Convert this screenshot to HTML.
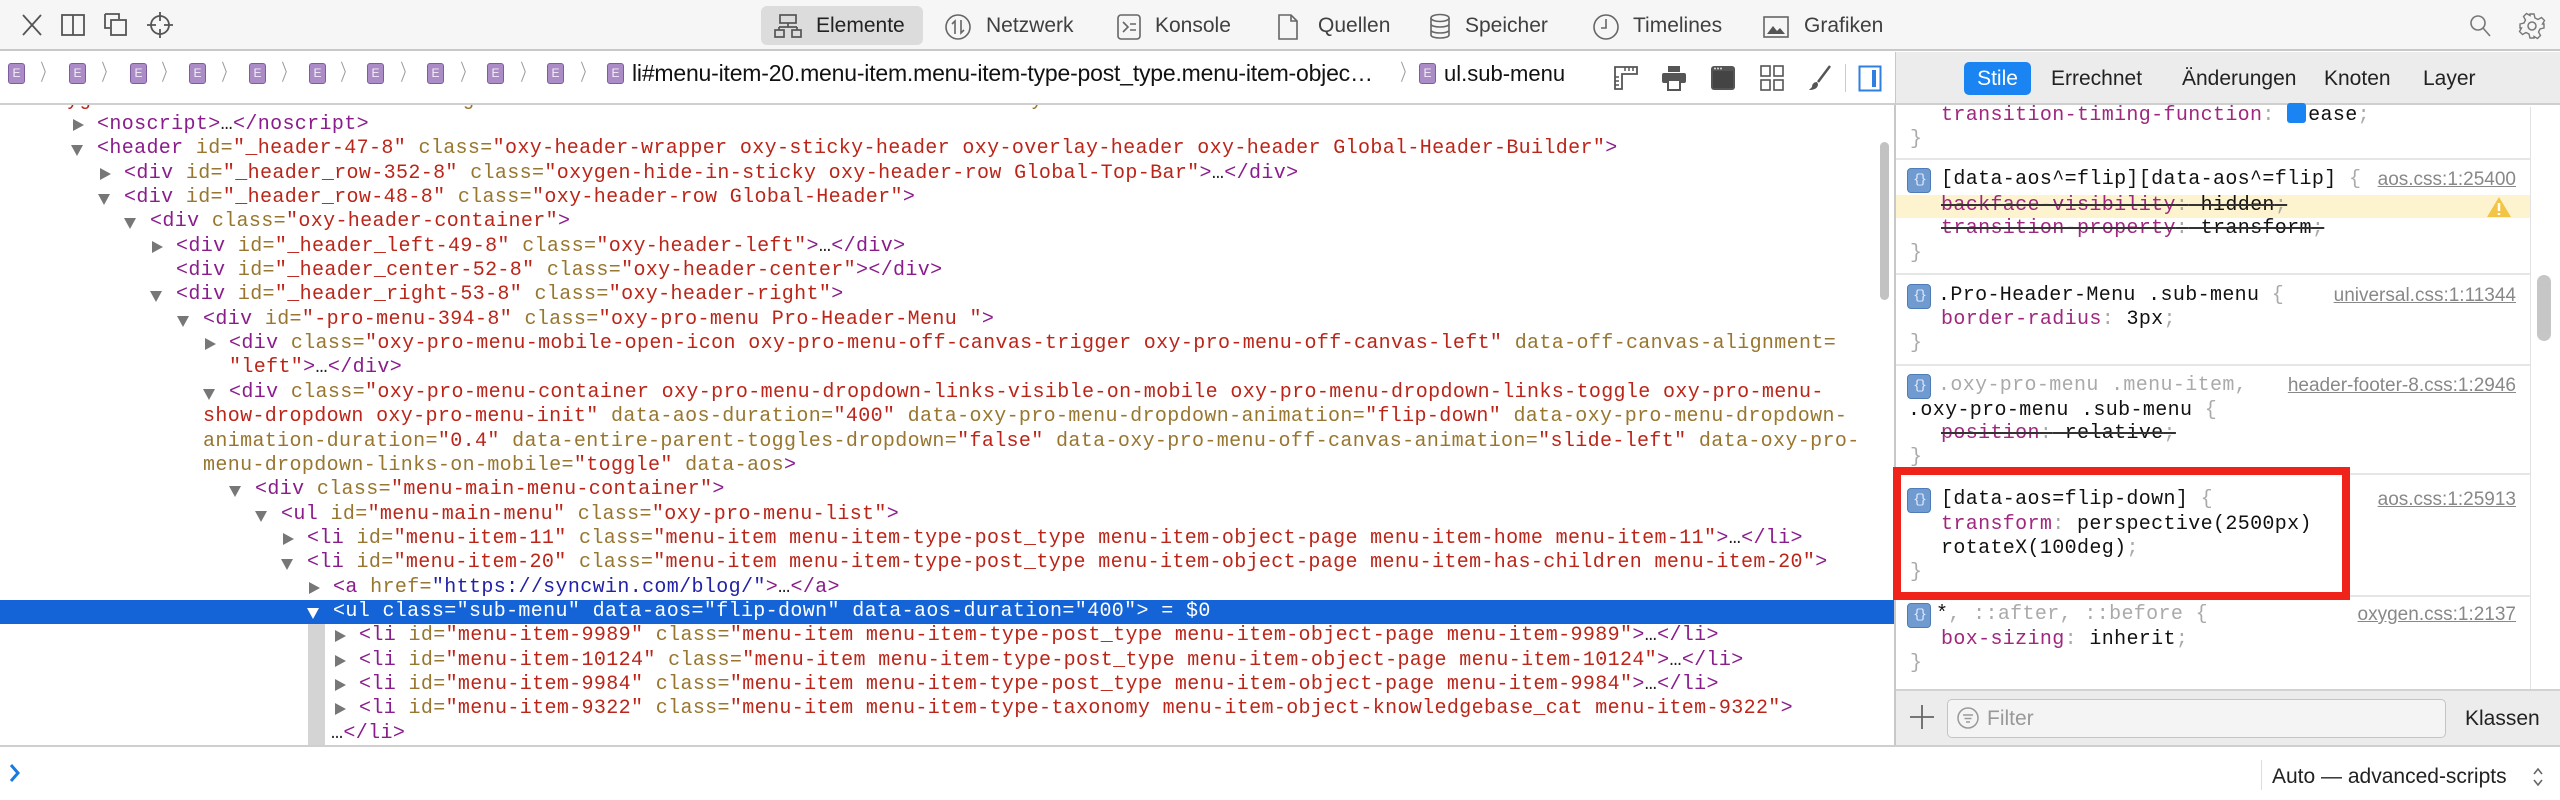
<!DOCTYPE html>
<html><head><meta charset="utf-8"><style>
*{margin:0;padding:0;box-sizing:border-box}
body{width:2560px;height:800px;position:relative;overflow:hidden;background:#fff;font-family:"Liberation Sans",sans-serif;color:#333}
.abs{position:absolute}
#tb{left:0;top:0;width:2560px;height:51px;background:#f6f6f6;border-bottom:2px solid #c8c8c8}
.tab{position:absolute;top:14px;font-size:21px;color:#404040;line-height:24px}
.ti{position:absolute;top:13px}
#bc{left:0;top:52px;width:1895px;height:53px;background:#fff;border-bottom:2px solid #cfcfcf}
#side{left:1895px;top:52px;width:1665px;height:53px;background:#ececec;border-bottom:2px solid #cfcfcf;border-left:1px solid #c8c8c8}
.eb{position:absolute;top:63px;width:17px;height:21px;border-radius:3px;background:#ab8cc6;border:1px solid #7d5d9e;color:#f4eefa;font-size:12px;line-height:19px;text-align:center;font-family:"Liberation Sans",sans-serif}
.ch{position:absolute;top:60px;color:#9a9a9a;font-size:22px;line-height:26px;transform:scaleX(.6)}
.r{position:absolute;height:24px;line-height:24px;white-space:nowrap;font-family:"Liberation Mono",monospace;font-size:20px;letter-spacing:0.36px;color:#222}
t{color:#8a1c8c}n{color:#98762f}v{color:#bb2519}w{color:#2222a8}
.tr{position:absolute;left:-24px;top:6px;width:0;height:0;border-top:6px solid transparent;border-bottom:6px solid transparent;border-left:11px solid #777}
.td{position:absolute;left:-26px;top:8px;width:0;height:0;border-left:6px solid transparent;border-right:6px solid transparent;border-top:11px solid #777}
.sel{color:#fff}
.sl{position:absolute;height:24px;line-height:24px;white-space:nowrap;font-family:"Liberation Mono",monospace;font-size:20px;letter-spacing:0.36px;color:#111}
.pn{color:#a0267f}.g{color:#aaa}.st{text-decoration:line-through;text-decoration-color:#333}
.ic{position:absolute;left:1907px;width:24px;height:25px;border-radius:4px;background:#6f9bd0;border:1px solid #4f7cb4;color:#eef;font-size:13px;line-height:22px;text-align:center;font-family:"Liberation Mono",monospace;letter-spacing:-2px}
.lk{position:absolute;right:44px;font-size:19px;color:#888;text-decoration:underline;line-height:24px}
.sep{position:absolute;left:1896px;width:634px;height:2px;background:#e6e6e6}
</style></head><body>

<div id="tb" class="abs"></div>
<svg class="abs" style="left:20px;top:12px" width="24" height="26" viewBox="0 0 24 26"><path d="M3 3L21 23M21 3L3 23" stroke="#555" stroke-width="1.8" fill="none"/></svg>
<svg class="abs" style="left:60px;top:12px" width="26" height="26" viewBox="0 0 26 26"><rect x="2" y="3" width="22" height="20" fill="none" stroke="#555" stroke-width="1.8"/><path d="M13 3V23" stroke="#555" stroke-width="1.8"/></svg>
<svg class="abs" style="left:102px;top:11px" width="28" height="28" viewBox="0 0 28 28"><path d="M3 3h14v5M3 3v14h5" fill="none" stroke="#555" stroke-width="1.8"/><rect x="9" y="9" width="15" height="15" fill="none" stroke="#555" stroke-width="1.8"/></svg>
<svg class="abs" style="left:146px;top:11px" width="28" height="28" viewBox="0 0 28 28"><circle cx="14" cy="14" r="9" fill="none" stroke="#555" stroke-width="1.8"/><path d="M14 1v9M14 18v9M1 14h9M18 14h9" stroke="#555" stroke-width="1.8"/></svg>
<div class="abs" style="left:761px;top:6px;width:162px;height:39px;background:#dcdcdc;border-radius:6px"></div>
<svg class="ti" style="left:774px" width="28" height="26" viewBox="0 0 28 26"><rect x="6" y="2" width="16" height="8" fill="none" stroke="#555" stroke-width="1.7"/><path d="M14 10v4M5 14h18M5 14v3M23 14v3" stroke="#555" stroke-width="1.7" fill="none"/><rect x="1" y="17" width="9" height="7" fill="none" stroke="#555" stroke-width="1.7"/><rect x="18" y="17" width="9" height="7" fill="none" stroke="#555" stroke-width="1.7"/></svg>
<div class="tab" style="left:816px;color:#222">Elemente</div>
<svg class="ti" style="left:944px" width="28" height="28" viewBox="0 0 28 28"><circle cx="14" cy="14" r="12" fill="none" stroke="#666" stroke-width="1.6"/><path d="M11 21V8l-3 3M17 7v13l3-3" fill="none" stroke="#666" stroke-width="1.6"/></svg>
<div class="tab" style="left:986px">Netzwerk</div>
<svg class="ti" style="left:1116px" width="26" height="28" viewBox="0 0 26 28"><rect x="2" y="2" width="22" height="24" rx="3" fill="none" stroke="#666" stroke-width="1.6"/><path d="M7 9l5 5-5 5M14 11h6M14 17h6" fill="none" stroke="#666" stroke-width="1.6"/></svg>
<div class="tab" style="left:1155px">Konsole</div>
<svg class="ti" style="left:1276px" width="24" height="28" viewBox="0 0 24 28"><path d="M3 2h12l6 6v18H3z" fill="none" stroke="#666" stroke-width="1.6"/><path d="M15 2v6h6" fill="none" stroke="#666" stroke-width="1.6"/></svg>
<div class="tab" style="left:1318px">Quellen</div>
<svg class="ti" style="left:1428px" width="24" height="28" viewBox="0 0 24 28"><ellipse cx="12" cy="5" rx="9" ry="3.5" fill="none" stroke="#666" stroke-width="1.6"/><path d="M3 5v6c0 4 18 4 18 0V5M3 11v6c0 4 18 4 18 0v-6M3 17v5c0 4 18 4 18 0v-5" fill="none" stroke="#666" stroke-width="1.6"/></svg>
<div class="tab" style="left:1465px">Speicher</div>
<svg class="ti" style="left:1592px" width="28" height="28" viewBox="0 0 28 28"><circle cx="14" cy="14" r="12" fill="none" stroke="#666" stroke-width="1.6"/><path d="M14 6v9h-5" fill="none" stroke="#666" stroke-width="1.6"/></svg>
<div class="tab" style="left:1633px">Timelines</div>
<svg class="ti" style="left:1762px;top:15px" width="28" height="24" viewBox="0 0 28 24"><rect x="2" y="2" width="24" height="20" fill="none" stroke="#666" stroke-width="1.6"/><path d="M5 19l6-8 4 5 3-3 5 6z" fill="#555"/></svg>
<div class="tab" style="left:1804px">Grafiken</div>
<svg class="abs" style="left:2468px;top:13px" width="24" height="26" viewBox="0 0 24 26"><circle cx="10" cy="10" r="7" fill="none" stroke="#777" stroke-width="1.6"/><path d="M15 15l7 8" stroke="#777" stroke-width="1.6"/></svg>
<svg class="abs" style="left:2518px;top:12px" width="28" height="28" viewBox="0 0 28 28"><circle cx="14" cy="14" r="4" fill="none" stroke="#777" stroke-width="1.5"/><path d="M12 2h4l1 4 3 1.5 3.5-2 3 3-2 3.5L26 12v4l-4 1-1.5 3 2 3.5-3 3-3.5-2L16 26h-4l-1-4-3-1.5-3.5 2-3-3 2-3.5L2 16v-4l4-1 1.5-3-2-3.5 3-3 3.5 2z" fill="none" stroke="#777" stroke-width="1.4"/></svg>

<div id="bc" class="abs"></div>
<div id="side" class="abs"></div>
<div class="eb" style="left:8px">E</div><div class="ch" style="left:36px">〉</div>
<div class="eb" style="left:69px">E</div><div class="ch" style="left:97px">〉</div>
<div class="eb" style="left:130px">E</div><div class="ch" style="left:157px">〉</div>
<div class="eb" style="left:189px">E</div><div class="ch" style="left:217px">〉</div>
<div class="eb" style="left:249px">E</div><div class="ch" style="left:277px">〉</div>
<div class="eb" style="left:309px">E</div><div class="ch" style="left:336px">〉</div>
<div class="eb" style="left:367px">E</div><div class="ch" style="left:396px">〉</div>
<div class="eb" style="left:427px">E</div><div class="ch" style="left:456px">〉</div>
<div class="eb" style="left:487px">E</div><div class="ch" style="left:516px">〉</div>
<div class="eb" style="left:547px">E</div><div class="ch" style="left:576px">〉</div>
<div class="eb" style="left:607px">E</div>
<div class="abs" style="left:632px;top:60px;font-size:23px;line-height:27px;color:#111;white-space:nowrap;letter-spacing:-0.2px">li#menu-item-20.menu-item.menu-item-type-post_type.menu-item-objec…</div>
<div class="ch" style="left:1396px">〉</div>
<div class="eb" style="left:1419px">E</div>
<div class="abs" style="left:1444px;top:60px;font-size:22px;line-height:27px;color:#111;white-space:nowrap">ul.sub-menu</div>
<svg class="abs" style="left:1613px;top:65px" width="26" height="26" viewBox="0 0 26 26"><path d="M2 2h22v7H9v15H2z" fill="none" stroke="#555" stroke-width="1.8"/><path d="M12 2v4M16 2v4M20 2v4M2 12h4M2 16h4M2 20h4" stroke="#555" stroke-width="1.5"/></svg>
<svg class="abs" style="left:1661px;top:65px" width="26" height="26" viewBox="0 0 26 26"><rect x="7" y="1" width="12" height="6" fill="#555"/><rect x="1" y="8" width="24" height="10" rx="2" fill="#555"/><rect x="7" y="15" width="12" height="10" fill="#fff" stroke="#555" stroke-width="2"/></svg>
<svg class="abs" style="left:1710px;top:65px" width="26" height="26" viewBox="0 0 26 26"><rect x="1" y="1" width="24" height="24" rx="3" fill="#555"/><rect x="3" y="6" width="20" height="17" fill="#444"/><circle cx="5" cy="3.5" r="1" fill="#ddd"/><circle cx="8" cy="3.5" r="1" fill="#ddd"/><circle cx="11" cy="3.5" r="1" fill="#ddd"/></svg>
<svg class="abs" style="left:1760px;top:65px" width="25" height="26" viewBox="0 0 25 26"><rect x="1" y="1" width="9" height="10" fill="none" stroke="#555" stroke-width="1.6"/><rect x="14" y="1" width="9" height="10" fill="none" stroke="#555" stroke-width="1.6"/><rect x="1" y="15" width="9" height="10" fill="none" stroke="#555" stroke-width="1.6"/><rect x="14" y="15" width="9" height="10" fill="none" stroke="#555" stroke-width="1.6"/></svg>
<svg class="abs" style="left:1808px;top:65px" width="24" height="26" viewBox="0 0 24 26"><path d="M22 1L10 17" stroke="#555" stroke-width="2.5"/><path d="M9 17c-3 0-5 2-5 5l-3 3c4 0 9-1 9-6z" fill="#555"/></svg>
<div class="abs" style="left:1845px;top:64px;width:1px;height:28px;background:#ccc"></div>
<svg class="abs" style="left:1858px;top:65px" width="24" height="27" viewBox="0 0 24 27"><rect x="1.5" y="1.5" width="21" height="24" fill="none" stroke="#2f7fe0" stroke-width="2"/><rect x="14" y="5" width="4" height="17" fill="#2f7fe0"/></svg>

<div class="abs" style="left:1964px;top:62px;width:67px;height:33px;background:#1a84f2;border-radius:5px;color:#fff;font-size:21px;line-height:33px;text-align:center">Stile</div>
<div class="abs" style="left:2051px;top:66px;font-size:21px;color:#222;line-height:26px">Errechnet</div>
<div class="abs" style="left:2182px;top:66px;font-size:21px;color:#222;line-height:26px">Änderungen</div>
<div class="abs" style="left:2324px;top:66px;font-size:21px;color:#222;line-height:26px">Knoten</div>
<div class="abs" style="left:2423px;top:66px;font-size:21px;color:#222;line-height:26px">Layer</div>

<div class="abs" style="left:0;top:600px;width:1894px;height:24px;background:#1464d8"></div>
<div class="abs" style="left:308px;top:624px;width:17px;height:122px;background:#d4d4d4"></div>
<div class="abs" style="left:1880px;top:142px;width:9px;height:158px;background:#c2c2c2;border-radius:5px"></div>

<div class="r" style="top:89px;left:42px;clip-path:inset(16px 0 0 0)"><v>oxygen-aos-enabled"</v> <n>data-aos-easing=</n><v>"ease"</v> <n>data-aos-duration=</n><v>"400"</v> <n>data-aos-delay=</n><v>"0"</v><t>&gt;</t></div>
<div class="r" style="top:113px;left:97px"><i class="tr"></i><t>&lt;noscript&gt;</t>…<t>&lt;/noscript&gt;</t></div>
<div class="r" style="top:137px;left:97px"><i class="td"></i><t>&lt;header</t> <n>id=</n><v>"_header-47-8"</v> <n>class=</n><v>"oxy-header-wrapper oxy-sticky-header oxy-overlay-header oxy-header Global-Header-Builder"</v><t>&gt;</t></div>
<div class="r" style="top:162px;left:124px"><i class="tr"></i><t>&lt;div</t> <n>id=</n><v>"_header_row-352-8"</v> <n>class=</n><v>"oxygen-hide-in-sticky oxy-header-row Global-Top-Bar"</v><t>&gt;</t>…<t>&lt;/div&gt;</t></div>
<div class="r" style="top:186px;left:124px"><i class="td"></i><t>&lt;div</t> <n>id=</n><v>"_header_row-48-8"</v> <n>class=</n><v>"oxy-header-row Global-Header"</v><t>&gt;</t></div>
<div class="r" style="top:210px;left:150px"><i class="td"></i><t>&lt;div</t> <n>class=</n><v>"oxy-header-container"</v><t>&gt;</t></div>
<div class="r" style="top:235px;left:176px"><i class="tr"></i><t>&lt;div</t> <n>id=</n><v>"_header_left-49-8"</v> <n>class=</n><v>"oxy-header-left"</v><t>&gt;</t>…<t>&lt;/div&gt;</t></div>
<div class="r" style="top:259px;left:176px"><t>&lt;div</t> <n>id=</n><v>"_header_center-52-8"</v> <n>class=</n><v>"oxy-header-center"</v><t>&gt;&lt;/div&gt;</t></div>
<div class="r" style="top:283px;left:176px"><i class="td"></i><t>&lt;div</t> <n>id=</n><v>"_header_right-53-8"</v> <n>class=</n><v>"oxy-header-right"</v><t>&gt;</t></div>
<div class="r" style="top:308px;left:203px"><i class="td"></i><t>&lt;div</t> <n>id=</n><v>"-pro-menu-394-8"</v> <n>class=</n><v>"oxy-pro-menu Pro-Header-Menu "</v><t>&gt;</t></div>
<div class="r" style="top:332px;left:229px"><i class="tr"></i><t>&lt;div</t> <n>class=</n><v>"oxy-pro-menu-mobile-open-icon oxy-pro-menu-off-canvas-trigger oxy-pro-menu-off-canvas-left"</v> <n>data-off-canvas-alignment=</n></div>
<div class="r" style="top:356px;left:229px"><v>"left"</v><t>&gt;</t>…<t>&lt;/div&gt;</t></div>
<div class="r" style="top:381px;left:229px"><i class="td"></i><t>&lt;div</t> <n>class=</n><v>"oxy-pro-menu-container oxy-pro-menu-dropdown-links-visible-on-mobile oxy-pro-menu-dropdown-links-toggle oxy-pro-menu-</v></div>
<div class="r" style="top:405px;left:203px"><v>show-dropdown oxy-pro-menu-init"</v> <n>data-aos-duration=</n><v>"400"</v> <n>data-oxy-pro-menu-dropdown-animation=</n><v>"flip-down"</v> <n>data-oxy-pro-menu-dropdown-</n></div>
<div class="r" style="top:430px;left:203px"><n>animation-duration=</n><v>"0.4"</v> <n>data-entire-parent-toggles-dropdown=</n><v>"false"</v> <n>data-oxy-pro-menu-off-canvas-animation=</n><v>"slide-left"</v> <n>data-oxy-pro-</n></div>
<div class="r" style="top:454px;left:203px"><n>menu-dropdown-links-on-mobile=</n><v>"toggle"</v> <n>data-aos</n><t>&gt;</t></div>
<div class="r" style="top:478px;left:255px"><i class="td"></i><t>&lt;div</t> <n>class=</n><v>"menu-main-menu-container"</v><t>&gt;</t></div>
<div class="r" style="top:503px;left:281px"><i class="td"></i><t>&lt;ul</t> <n>id=</n><v>"menu-main-menu"</v> <n>class=</n><v>"oxy-pro-menu-list"</v><t>&gt;</t></div>
<div class="r" style="top:527px;left:307px"><i class="tr"></i><t>&lt;li</t> <n>id=</n><v>"menu-item-11"</v> <n>class=</n><v>"menu-item menu-item-type-post_type menu-item-object-page menu-item-home menu-item-11"</v><t>&gt;</t>…<t>&lt;/li&gt;</t></div>
<div class="r" style="top:551px;left:307px"><i class="td"></i><t>&lt;li</t> <n>id=</n><v>"menu-item-20"</v> <n>class=</n><v>"menu-item menu-item-type-post_type menu-item-object-page menu-item-has-children menu-item-20"</v><t>&gt;</t></div>
<div class="r" style="top:576px;left:333px"><i class="tr"></i><t>&lt;a</t> <n>href=</n><w>"https://syncwin.com/blog/"</w><t>&gt;</t>…<t>&lt;/a&gt;</t></div>
<div class="r sel" style="top:600px;left:333px"><i class="td" style="border-top-color:#fff"></i>&lt;ul class="sub-menu" data-aos="flip-down" data-aos-duration="400"&gt; = $0</div>
<div class="r" style="top:624px;left:359px"><i class="tr"></i><t>&lt;li</t> <n>id=</n><v>"menu-item-9989"</v> <n>class=</n><v>"menu-item menu-item-type-post_type menu-item-object-page menu-item-9989"</v><t>&gt;</t>…<t>&lt;/li&gt;</t></div>
<div class="r" style="top:649px;left:359px"><i class="tr"></i><t>&lt;li</t> <n>id=</n><v>"menu-item-10124"</v> <n>class=</n><v>"menu-item menu-item-type-post_type menu-item-object-page menu-item-10124"</v><t>&gt;</t>…<t>&lt;/li&gt;</t></div>
<div class="r" style="top:673px;left:359px"><i class="tr"></i><t>&lt;li</t> <n>id=</n><v>"menu-item-9984"</v> <n>class=</n><v>"menu-item menu-item-type-post_type menu-item-object-page menu-item-9984"</v><t>&gt;</t>…<t>&lt;/li&gt;</t></div>
<div class="r" style="top:697px;left:359px"><i class="tr"></i><t>&lt;li</t> <n>id=</n><v>"menu-item-9322"</v> <n>class=</n><v>"menu-item menu-item-type-taxonomy menu-item-object-knowledgebase_cat menu-item-9322"</v><t>&gt;</t></div>
<div class="r" style="top:722px;left:331px">…<t>&lt;/li&gt;</t></div>

<div class="abs" style="left:1894px;top:105px;width:2px;height:641px;background:#c8c8c8"></div>

<div class="abs" style="left:2530px;top:107px;width:1px;height:583px;background:#e2e2e2"></div>
<div class="abs" style="left:2537px;top:275px;width:14px;height:66px;background:#c6c6c6;border-radius:7px"></div>

<div class="sl" style="top:103px;left:1941px"><span class="pn">transition-timing-function</span><span class="g">:</span> <span style="display:inline-block;width:19px;height:20px;background:#1a84f2;border-radius:3px;vertical-align:-3px;margin-right:2px"></span>ease<span class="g">;</span></div>
<div class="sl g" style="top:128px;left:1910px">}</div>
<div class="sep" style="top:158px"></div>

<div class="ic" style="top:168px">{}</div>
<div class="sl" style="top:168px;left:1941px">[data-aos^=flip][data-aos^=flip] <span class="g">{</span></div>
<div class="lk" style="top:168px">aos.css:1:25400</div>
<div class="abs" style="left:1896px;top:195px;width:634px;height:23px;background:#fdf3cf"></div>
<svg class="abs" style="left:2486px;top:196px" width="26" height="22" viewBox="0 0 26 22"><path d="M13 1L25 21H1z" fill="#f3c544"/><path d="M13 7v8M13 17v2" stroke="#fff" stroke-width="2.5"/></svg>
<div class="sl st" style="top:194px;left:1941px"><span class="pn">backface-visibility</span><span class="g">:</span> hidden<span class="g">;</span></div>
<div class="sl st" style="top:217px;left:1941px"><span class="pn">transition-property</span><span class="g">:</span> transform<span class="g">;</span></div>
<div class="sl g" style="top:242px;left:1910px">}</div>
<div class="sep" style="top:273px"></div>

<div class="ic" style="top:284px">{}</div>
<div class="sl" style="top:284px;left:1938px">.Pro-Header-Menu .sub-menu <span class="g">{</span></div>
<div class="lk" style="top:284px">universal.css:1:11344</div>
<div class="sl" style="top:308px;left:1941px"><span class="pn">border-radius</span><span class="g">:</span> 3px<span class="g">;</span></div>
<div class="sl g" style="top:332px;left:1910px">}</div>
<div class="sep" style="top:364px"></div>

<div class="ic" style="top:374px">{}</div>
<div class="sl g" style="top:374px;left:1938px">.oxy-pro-menu .menu-item,</div>
<div class="lk" style="top:374px">header-footer-8.css:1:2946</div>
<div class="sl" style="top:399px;left:1908px">.oxy-pro-menu .sub-menu <span class="g">{</span></div>
<div class="sl st" style="top:422px;left:1941px"><span class="pn">position</span><span class="g">:</span> relative<span class="g">;</span></div>
<div class="sl g" style="top:446px;left:1910px">}</div>
<div class="sep" style="top:473px"></div>

<div class="ic" style="top:488px">{}</div>
<div class="sl" style="top:488px;left:1941px">[data-aos=flip-down] <span class="g">{</span></div>
<div class="lk" style="top:488px">aos.css:1:25913</div>
<div class="sl" style="top:513px;left:1941px"><span class="pn">transform</span><span class="g">:</span> perspective(2500px)</div>
<div class="sl" style="top:537px;left:1941px">rotateX(100deg)<span class="g">;</span></div>
<div class="sl g" style="top:561px;left:1910px">}</div>
<div class="abs" style="left:1893px;top:467px;width:457px;height:133px;border:8px solid #f0231a"></div>
<div class="sep" style="top:595px;left:2350px;width:180px"></div>

<div class="ic" style="top:603px">{}</div>
<div class="sl" style="top:603px;left:1936px">*<span class="g">, ::after, ::before {</span></div>
<div class="lk" style="top:603px">oxygen.css:1:2137</div>
<div class="sl" style="top:628px;left:1941px"><span class="pn">box-sizing</span><span class="g">:</span> inherit<span class="g">;</span></div>
<div class="sl g" style="top:652px;left:1910px">}</div>

<div class="abs" style="left:1896px;top:689px;width:664px;height:57px;background:#ececec;border-top:2px solid #d2d2d2"></div>
<svg class="abs" style="left:1909px;top:704px" width="26" height="26" viewBox="0 0 26 26"><path d="M13 1v24M1 13h24" stroke="#666" stroke-width="1.8"/></svg>
<div class="abs" style="left:1947px;top:699px;width:499px;height:39px;background:#f4f4f4;border:1.5px solid #c4c4c4;border-radius:5px"></div>
<svg class="abs" style="left:1956px;top:706px" width="24" height="24" viewBox="0 0 24 24"><circle cx="12" cy="12" r="10" fill="none" stroke="#999" stroke-width="1.5"/><path d="M7 9h10M8.5 12.5h7M10 16h4" stroke="#999" stroke-width="1.5"/></svg>
<div class="abs" style="left:1987px;top:706px;font-size:21px;color:#999;line-height:26px">Filter</div>
<div class="abs" style="left:2465px;top:706px;font-size:21px;color:#222;line-height:26px">Klassen</div>

<div class="abs" style="left:0;top:745px;width:2560px;height:2px;background:#cfcfcf"></div>
<svg class="abs" style="left:9px;top:763px" width="12" height="20" viewBox="0 0 12 20"><path d="M2 2l7 8-7 8" fill="none" stroke="#1a7ae0" stroke-width="3"/></svg>
<div class="abs" style="left:2261px;top:760px;width:1px;height:30px;background:#ddd"></div>
<div class="abs" style="left:2272px;top:764px;font-size:21px;color:#222;line-height:26px;white-space:nowrap">Auto — advanced-scripts</div>
<svg class="abs" style="left:2531px;top:765px" width="14" height="24" viewBox="0 0 14 24"><path d="M3 9l4-5 4 5M3 15l4 5 4-5" fill="none" stroke="#666" stroke-width="1.6"/></svg>
</body></html>
